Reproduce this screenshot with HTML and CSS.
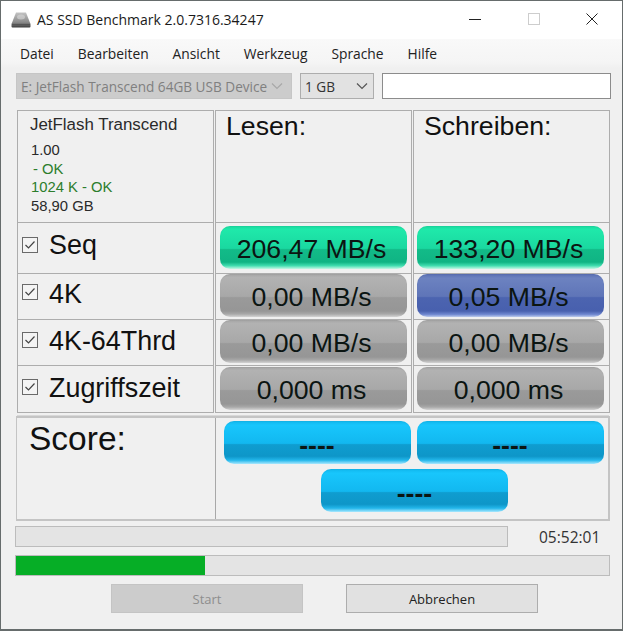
FILE: index.html
```html
<!DOCTYPE html>
<html lang="de">
<head>
<meta charset="utf-8">
<title>AS SSD Benchmark</title>
<link rel="stylesheet" href="styles.css">
</head>
<body>
<div class="window">
  <header class="titlebar">
    <svg class="app-icon" width="20" height="16" viewBox="0 0 20 16">
      <defs>
        <linearGradient id="disk" x1="0" y1="0" x2="0" y2="1">
          <stop offset="0" stop-color="#c4c4c4"/>
          <stop offset="0.65" stop-color="#8a8a8a"/>
          <stop offset="1" stop-color="#3c3c3c"/>
        </linearGradient>
      </defs>
      <path d="M5 0.5h10L19.5 12v2.5q0 1-1 1H1.500q-1 0-1-1V12z" fill="url(#disk)"/>
      <path d="M1 12.500h18" stroke="#555" stroke-width="1"/>
      <ellipse cx="10" cy="5" rx="4" ry="2.500" fill="#d8d8d8" opacity="0.6"/>
    </svg>
    <span class="title-text">AS SSD Benchmark 2.0.7316.34247</span>
    <div class="controls">
      <svg class="ctl" width="14" height="14" viewBox="0 0 14 14"><path d="M1 7.500h12" stroke="#222" stroke-width="1"/></svg>
      <svg class="ctl" width="14" height="14" viewBox="0 0 14 14"><rect x="1.500" y="1.500" width="11" height="11" fill="none" stroke="#cdcdcd"/></svg>
      <svg class="ctl" width="14" height="14" viewBox="0 0 14 14"><path d="M1.500 1.500l11 11M12.500 1.500l-11 11" stroke="#222" stroke-width="1"/></svg>
    </div>
  </header>

  <nav class="menubar">
    <span>Datei</span><span>Bearbeiten</span><span>Ansicht</span><span>Werkzeug</span><span>Sprache</span><span>Hilfe</span>
  </nav>

  <div class="content">
    <div class="toolbar">
      <div class="combo combo-drive">
        <span class="combo-text">E: JetFlash Transcend 64GB USB Device</span>
        <svg class="chev" width="12" height="8" viewBox="0 0 12 8"><path d="M1 1.500l5 5 5-5" fill="none" stroke="#a8a8a8" stroke-width="1.200"/></svg>
      </div>
      <div class="combo combo-size">
        <span class="combo-text">1 GB</span>
        <svg class="chev" width="12" height="8" viewBox="0 0 12 8"><path d="M1 1.500l5 5 5-5" fill="none" stroke="#555" stroke-width="1.200"/></svg>
      </div>
      <div class="textbox"></div>
    </div>

    <section class="table">
      <div class="cell info">
        <div class="drive-name">JetFlash Transcend</div>
        <div class="info-line">1.00</div>
        <div class="info-line ok indent">- OK</div>
        <div class="info-line ok">1024 K - OK</div>
        <div class="info-line">58,90 GB</div>
      </div>
      <div class="cell head">Lesen:</div>
      <div class="cell head">Schreiben:</div>

      <div class="cell label p-seq"><svg class="check" width="16" height="16" viewBox="0 0 16 16"><rect x="0.500" y="0.500" width="15" height="15" fill="#f4f4f4" stroke="#6a6a6a"/><path d="M3.500 8l3 3 6-6.500" fill="none" stroke="#444" stroke-width="1.200"/></svg><span>Seq</span></div>
      <div class="cell val p-seq"><div class="pill green">206,47 MB/s</div></div>
      <div class="cell val right p-seq"><div class="pill green">133,20 MB/s</div></div>

      <div class="cell label p-4k"><svg class="check" width="16" height="16" viewBox="0 0 16 16"><rect x="0.500" y="0.500" width="15" height="15" fill="#f4f4f4" stroke="#6a6a6a"/><path d="M3.500 8l3 3 6-6.500" fill="none" stroke="#444" stroke-width="1.200"/></svg><span>4K</span></div>
      <div class="cell val p-4k"><div class="pill gray">0,00 MB/s</div></div>
      <div class="cell val right p-4k"><div class="pill blue">0,05 MB/s</div></div>

      <div class="cell label p-64"><svg class="check" width="16" height="16" viewBox="0 0 16 16"><rect x="0.500" y="0.500" width="15" height="15" fill="#f4f4f4" stroke="#6a6a6a"/><path d="M3.500 8l3 3 6-6.500" fill="none" stroke="#444" stroke-width="1.200"/></svg><span>4K-64Thrd</span></div>
      <div class="cell val p-64"><div class="pill gray">0,00 MB/s</div></div>
      <div class="cell val right p-64"><div class="pill gray">0,00 MB/s</div></div>

      <div class="cell label p-acc last"><svg class="check" width="16" height="16" viewBox="0 0 16 16"><rect x="0.500" y="0.500" width="15" height="15" fill="#f4f4f4" stroke="#6a6a6a"/><path d="M3.500 8l3 3 6-6.500" fill="none" stroke="#444" stroke-width="1.200"/></svg><span>Zugriffszeit</span></div>
      <div class="cell val p-acc last"><div class="pill gray">0,000 ms</div></div>
      <div class="cell val right p-acc last"><div class="pill gray">0,000 ms</div></div>
    </section>

    <section class="score">
      <div class="score-label">Score:</div>
      <div class="score-values">
        <div class="pill cyan">----</div>
        <div class="pill cyan">----</div>
        <div class="pill cyan">----</div>
      </div>
    </section>

    <div class="progress-row">
      <div class="bar bar-time"></div>
      <span class="time">05:52:01</span>
    </div>
    <div class="bar bar-main"><div class="bar-fill"></div></div>

    <div class="buttons">
      <div class="btn disabled">Start</div>
      <div class="btn">Abbrechen</div>
    </div>
  </div>
</div>
</body>
</html>
```
FILE: styles.css
```css
* { box-sizing: border-box; }
html, body { margin: 0; padding: 0; }
body { width: 623px; height: 631px; overflow: hidden; background: #f0f0f0; }

.window {
  width: 623px;
  height: 631px;
  border: 1px solid #666c6c;
  border-bottom-width: 2px;
  background: #f0f0f0;
  display: flex;
  flex-direction: column;
  font-family: "Open Sans", "Noto Sans", sans-serif;
  color: #1a1a1a;
}

.titlebar {
  height: 38px;
  flex: none;
  background: #fff;
  display: flex;
  align-items: center;
  padding: 0 0 0 10px;
}
.app-icon { flex: none; margin-top: -1px; }
.title-text { margin-left: 6px; font-size: 14px; margin-top: -2px; white-space: nowrap; }
.controls { margin-left: auto; display: flex; align-items: center; gap: 44.500px; padding-right: 23px; margin-top: -2px; }
.ctl { display: block; }

.menubar {
  height: 29px;
  flex: none;
  background: linear-gradient(#f9f9f9, #f5f5f5 80%, #f0f0f0);
  display: flex;
  align-items: center;
  gap: 24px;
  padding-left: 19px;
  font-size: 13.800px;
  color: #222;
}

.content { flex: 1; display: flex; flex-direction: column; padding: 5px 11px 0 14px; }

.toolbar { display: flex; gap: 8px; height: 26px; margin-left: 1px; }
.combo { display: flex; align-items: center; height: 26px; font-size: 13.6px; border: 1px solid #bdbdbd; }
.combo-drive { width: 276px; background: #cccccc; color: #808080; padding: 0 8px 0 4px; border-color: #c6c6c6; }
.combo-size { width: 74px; background: #e2e2e2; color: #333; padding: 0 5px 0 4px; border-color: #adadad; }
.combo-text { flex: 1; white-space: nowrap; overflow: hidden; }
.chev { flex: none; }
.textbox { width: 229px; background: #fff; border: 1px solid #8c8c8c; }

.table {
  margin: 11px 0 0 2px;
  width: 593px;
  display: grid;
  grid-template-columns: 197px 197px 197px;
  grid-template-rows: 112px 51px 46px 46px 48px;
  column-gap: 1px;
}
.cell {
  border: 1px solid #adadad;
  border-bottom: 0;
  background: #f0f0f0;
}
.cell.last { border-bottom: 1px solid #adadad; }

.info { padding: 4px 0 0 12px; font-family: "Liberation Sans", sans-serif; font-size: 14.800px; color: #2a2a2a; }
.drive-name { font-size: 16.900px; line-height: 20px; margin-bottom: 6px; }
.info-line { line-height: 18.700px; padding-left: 1px; }
.info-line.ok { color: #2c7d2c; }
.info-line.indent { padding-left: 3px; }

.head { font-family: "Liberation Sans", sans-serif; font-size: 26.670px; line-height: 30px; padding: 0 0 0 10px; color: #111; }

.label {
  display: flex;
  align-items: flex-start;
  font-family: "Liberation Sans", sans-serif;
  font-size: 26.900px;
  line-height: 30px;
  color: #111;
  padding-left: 4px;
}
.check { flex: none; }
.label span { margin-left: 11px; }
.p-seq.label { padding-top: 7px; }
.p-seq.label .check { margin-top: 7px; }
.p-4k.label { padding-top: 5px; }
.p-4k.label .check { margin-top: 5px; }
.p-64.label { padding-top: 6px; }
.p-64.label .check { margin-top: 6px; }
.p-acc.label { padding-top: 7px; }
.p-acc.label .check { margin-top: 6px; }

.val { padding: 0 0 0 4px; }
.val.right { padding-left: 3px; }
.val.p-seq { padding-top: 3px; }
.val.p-4k { padding-top: 0; }
.val.p-64 { padding-top: 0; }
.val.p-acc { padding-top: 1px; }

.pill {
  width: 187px;
  height: 43px;
  border-radius: 10px;
  display: flex;
  align-items: center;
  justify-content: center;
  font-family: "Liberation Sans", sans-serif;
  font-size: 26.670px;
  color: #0b1512;
  padding: 3px 4px 0 0;
  box-shadow: inset 0 1px 1px rgba(0, 0, 0, 0.04);
}
.green { background: linear-gradient(#1cd9a0 0, #1fe9aa 8%, #1ad8a0 52%, #12bb88 55%, #10b484 84%, #3fdcae 92%, #c6f8e6 100%); }
.gray { background: linear-gradient(#a6a6a6 0, #b2b2b2 8%, #a8a8a8 52%, #9a9a9a 55%, #969696 86%, #a8a8a8 93%, #d4d4d4 100%); }
.blue { background: linear-gradient(#5a70b4 0, #6c82c0 10%, #5f75b8 52%, #4c64b0 55%, #4860ae 86%, #7088d0 94%, #bccaec 100%); }
.cyan {
  background: linear-gradient(#12b8ee 0, #18c6fc 10%, #12b8f0 52%, #0f9dd0 55%, #0e96c8 82%, #22b6ea 91%, #a8e8ff 100%);
  font-weight: 700;
  padding: 5px 0 0 0;
}
.cyan:last-child { margin-left: 2px; }

.score {
  margin: 3px 0 0 1px;
  width: 594px;
  height: 105px;
  display: flex;
  background: #f0f0f0;
  border: 1px solid #c4c4c4;
  border-width: 2px 2px 2px 1px;
  box-shadow: 0 -2px 0 -1px #d8d8d8;
}
.score-label {
  width: 199px;
  flex: none;
  border-right: 1px solid #a8a8a8;
  font-family: "Liberation Sans", sans-serif;
  font-size: 33.500px;
  line-height: 38px;
  padding: 2px 0 0 12px;
  color: #111;
}
.score-values {
  flex: 1;
  display: flex;
  flex-wrap: wrap;
  justify-content: center;
  align-content: flex-start;
  gap: 5px 6px;
  padding: 3px 4px 0 7px;
}

.progress-row { display: flex; align-items: center; margin-top: 5px; height: 21px; }
.bar { background: #e4e4e4; border: 1px solid #bcbcbc; }
.bar-time { width: 493px; height: 21px; }
.time { margin-left: 31px; font-size: 15.500px; color: #333; white-space: nowrap; }
.bar-main { width: 595px; height: 21px; margin-top: 8px; }
.bar-fill { width: 189px; height: 100%; background: #06ae26; }

.buttons { display: flex; gap: 43px; margin: 8px 0 0 96px; }
.btn {
  width: 192px;
  height: 29px;
  display: flex;
  align-items: center;
  justify-content: center;
  font-size: 13px;
  background: #e1e1e1;
  border: 1px solid #adadad;
  color: #222;
}
.btn.disabled { background: #cccccc; border-color: #c4c4c4; color: #8e8e8e; }
```
